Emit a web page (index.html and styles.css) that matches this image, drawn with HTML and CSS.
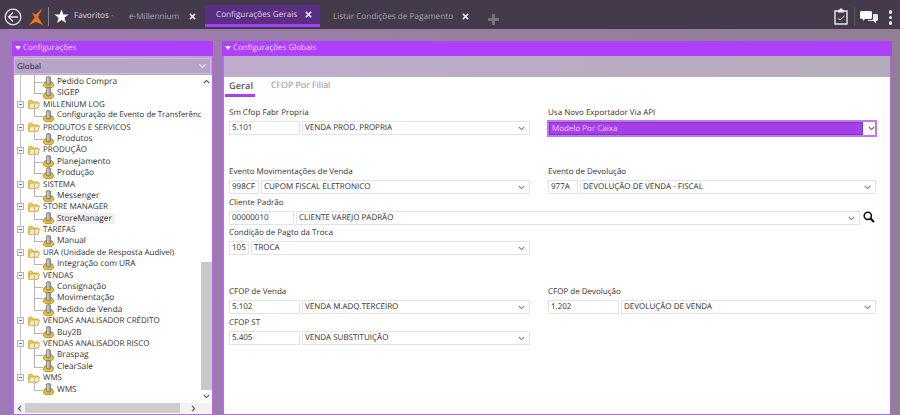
FILE: index.html
```html
<!DOCTYPE html>
<html lang="pt-BR">
<head>
<meta charset="utf-8">
<title>Configurações Gerais</title>
<link rel="stylesheet" href="styles.css">
</head>
<body>
<svg class="defs" width="0" height="0" aria-hidden="true">
  <symbol id="node" viewBox="0 0 11 12">
    <path d="M.6 8 2 5.800h1.700v2h3.600v-2H9L10.400 8v2L8.800 11.600H2.200L.6 10Z" fill="#ecc02f" stroke="#a97f12" stroke-width=".8"/>
    <rect x="3.400" y=".6" width="4.200" height="8.400" rx="1.400" fill="#a3a3a3" stroke="#6f6f6f" stroke-width=".7"/>
    <rect x="4.400" y="1.500" width="1" height="6.500" fill="#e2e2e2"/>
  </symbol>
  <symbol id="folder" viewBox="0 0 12 10">
    <path d="M.6 2V8.800H10V3H5L4 1.200H1.400Z" fill="#f1c94e" stroke="#c9a53a" stroke-width=".8"/>
    <path d="M2.200 4H11.500L10 9.300H.6Z" fill="#fdeeaa" stroke="#c9a53a" stroke-width=".8"/>
  </symbol>
  <symbol id="chev" viewBox="0 0 7 5">
    <path d="M.8 1 3.500 3.600 6.200 1" fill="none" stroke="currentColor" stroke-width="1.100"/>
  </symbol>
  <symbol id="close" viewBox="0 0 8 8">
    <path d="M1 1 7 7M7 1 1 7" fill="none" stroke="currentColor" stroke-width="2"/>
  </symbol>
</svg>

<header class="topbar">
  <svg class="ic-back" viewBox="0 0 18 18"><circle cx="9" cy="9" r="7.800" fill="none" stroke="#e6e2ea" stroke-width="1.300"/><path d="M9 4.500 4.500 9 9 13.500M4.800 9H14" fill="none" stroke="#e6e2ea" stroke-width="1.300"/></svg>
  <svg class="ic-logo" viewBox="0 0 14 17"><path d="M13.500 0 7 6.500 3 4.500 5.800 9.500 0 17 7 14 14 17 9 9Z" fill="#f0731c"/></svg>
  <span class="vsep"></span>
  <svg class="ic-star" viewBox="0 0 17 17"><path d="M8.500 .5 10.600 6.200H16.500L11.800 10 13.600 16 8.500 12.400 3.400 16 5.200 10 .5 6.200H6.400Z" fill="#fff"/></svg>
  <span class="fav">Favoritos</span><span class="fav-dash">-</span>
  <nav class="tabs">
    <div class="tab t-mill"><span>e-Millennium</span><svg class="x"><use href="#close"/></svg></div>
    <div class="tab t-conf active"><span>Configurações Gerais</span><svg class="x"><use href="#close"/></svg></div>
    <div class="tab t-list"><span>Listar Condições de Pagamento</span><svg class="x"><use href="#close"/></svg></div>
    <svg class="plus" viewBox="0 0 11 11"><path d="M5.500 0V11M0 5.500H11" stroke="#77717c" stroke-width="3"/></svg>
  </nav>
  <div class="tools">
    <svg class="ic-clip" viewBox="0 0 14 17"><path d="M1 3H13V16H1Z" fill="none" stroke="#e8e8e8" stroke-width="1.400"/><path d="M4 1.800H5.500L6 .5H8L8.500 1.800H10V4.500H4Z" fill="#e8e8e8"/><path d="M4 10 6 12 10.500 8" fill="none" stroke="#e8e8e8" stroke-width="1"/></svg>
    <span class="vsep dim"></span>
    <svg class="ic-chat" viewBox="0 0 18 13"><path d="M0 1 1 0H11L12 1V7L11 8H5L3 10V8H1L0 7Z" fill="#fff"/><path d="M13 3H17L18 4V9L17 10H16V12.500L13.500 10H8.500L7.500 9H12L13 8Z" fill="#e9e9e9"/></svg>
    <span class="kebab"><i></i><i></i><i></i></span>
  </div>
</header>

<main class="desk">
  <section class="panel side">
    <h2 class="phead"><span class="tri"></span>Configurações</h2>
    <div class="scope"><div class="scope-box"><span>Global</span><svg class="chev"><use href="#chev"/></svg></div></div>
    <div class="treewrap">
      <div class="treerow">
        <ul class="tree">
          <li class="leaf"><svg class="ni"><use href="#node"/></svg><span>Pedido Compra</span></li>
          <li class="leaf"><svg class="ni"><use href="#node"/></svg><span>SIGEP</span></li>
          <li class="grp"><b class="box"></b><svg class="fo"><use href="#folder"/></svg><span>MILLENIUM LOG</span></li>
          <li class="leaf"><svg class="ni"><use href="#node"/></svg><span class="clip">Configuração de Evento de Transferência</span></li>
          <li class="grp"><b class="box"></b><svg class="fo"><use href="#folder"/></svg><span>PRODUTOS E SERVICOS</span></li>
          <li class="leaf"><svg class="ni"><use href="#node"/></svg><span>Produtos</span></li>
          <li class="grp"><b class="box"></b><svg class="fo"><use href="#folder"/></svg><span>PRODUÇÃO</span></li>
          <li class="leaf"><svg class="ni"><use href="#node"/></svg><span>Planejamento</span></li>
          <li class="leaf"><svg class="ni"><use href="#node"/></svg><span>Produção</span></li>
          <li class="grp"><b class="box"></b><svg class="fo"><use href="#folder"/></svg><span>SISTEMA</span></li>
          <li class="leaf"><svg class="ni"><use href="#node"/></svg><span>Messenger</span></li>
          <li class="grp"><b class="box"></b><svg class="fo"><use href="#folder"/></svg><span>STORE MANAGER</span></li>
          <li class="leaf"><svg class="ni"><use href="#node"/></svg><span class="sel">StoreManager</span></li>
          <li class="grp"><b class="box"></b><svg class="fo"><use href="#folder"/></svg><span>TAREFAS</span></li>
          <li class="leaf"><svg class="ni"><use href="#node"/></svg><span>Manual</span></li>
          <li class="grp"><b class="box"></b><svg class="fo"><use href="#folder"/></svg><span>URA (Unidade de Resposta Audível)</span></li>
          <li class="leaf"><svg class="ni"><use href="#node"/></svg><span>Integração com URA</span></li>
          <li class="grp"><b class="box"></b><svg class="fo"><use href="#folder"/></svg><span>VENDAS</span></li>
          <li class="leaf"><svg class="ni"><use href="#node"/></svg><span>Consignação</span></li>
          <li class="leaf"><svg class="ni"><use href="#node"/></svg><span>Movimentação</span></li>
          <li class="leaf"><svg class="ni"><use href="#node"/></svg><span>Pedido de Venda</span></li>
          <li class="grp"><b class="box"></b><svg class="fo"><use href="#folder"/></svg><span>VENDAS ANALISADOR CRÉDITO</span></li>
          <li class="leaf"><svg class="ni"><use href="#node"/></svg><span>Buy2B</span></li>
          <li class="grp"><b class="box"></b><svg class="fo"><use href="#folder"/></svg><span>VENDAS ANALISADOR RISCO</span></li>
          <li class="leaf"><svg class="ni"><use href="#node"/></svg><span>Braspag</span></li>
          <li class="leaf"><svg class="ni"><use href="#node"/></svg><span>ClearSale</span></li>
          <li class="grp"><b class="box"></b><svg class="fo"><use href="#folder"/></svg><span>WMS</span></li>
          <li class="leaf"><svg class="ni"><use href="#node"/></svg><span>WMS</span></li>
        </ul>
        <div class="vbar">
          <svg class="sa up"><use href="#chev"/></svg>
          <div class="vtrack"><div class="vthumb"></div></div>
          <svg class="sa"><use href="#chev"/></svg>
        </div>
      </div>
      <div class="hbar">
        <svg class="sa left"><use href="#chev"/></svg>
        <div class="hthumb"></div>
        <svg class="sa right"><use href="#chev"/></svg>
      </div>
    </div>
  </section>

  <section class="panel content">
    <h2 class="phead"><span class="tri"></span>Configurações Globais</h2>
    <div class="band"></div>
    <div class="sheet">
      <div class="ctabs"><span class="ctab on">Geral</span><span class="ctab">CFOP Por Filial</span></div>

      <div class="grid g1">
        <div class="field">
          <label>Sm Cfop Fabr Propria</label>
          <div class="line"><span class="code w70">5.101</span><span class="pick">VENDA PROD. PROPRIA<svg class="chev"><use href="#chev"/></svg></span></div>
        </div>
        <div class="field">
          <label>Usa Novo Exportador Via API</label>
          <div class="focus"><span class="focus-val">Modelo Por Caixa</span><svg class="chev"><use href="#chev"/></svg></div>
        </div>
      </div>

      <div class="grid g2">
        <div class="field">
          <label>Evento Movimentações de Venda</label>
          <div class="line"><span class="code w29">998CF</span><span class="pick">CUPOM FISCAL ELETRONICO<svg class="chev"><use href="#chev"/></svg></span></div>
        </div>
        <div class="field">
          <label>Evento de Devolução</label>
          <div class="line"><span class="code w29">977A</span><span class="pick">DEVOLUÇÃO DE VENDA - FISCAL<svg class="chev"><use href="#chev"/></svg></span></div>
        </div>
      </div>

      <div class="field wide">
        <label>Cliente Padrão</label>
        <div class="line"><span class="code w64">00000010</span><span class="pick">CLIENTE VAREJO PADRÃO<svg class="chev"><use href="#chev"/></svg></span>
          <svg class="lens" viewBox="0 0 12 12"><circle cx="4.800" cy="4.800" r="3.600" fill="none" stroke="#111" stroke-width="1.600"/><path d="M7.500 7.500 11 11" stroke="#111" stroke-width="2.200"/></svg>
        </div>
      </div>

      <div class="grid g4">
        <div class="field">
          <label>Condição de Pagto da Troca</label>
          <div class="line"><span class="code w19">105</span><span class="pick">TROCA<svg class="chev"><use href="#chev"/></svg></span></div>
        </div>
      </div>

      <div class="grid g5">
        <div class="field">
          <label>CFOP de Venda</label>
          <div class="line"><span class="code w70">5.102</span><span class="pick">VENDA M.ADQ.TERCEIRO<svg class="chev"><use href="#chev"/></svg></span></div>
        </div>
        <div class="field">
          <label>CFOP de Devolução</label>
          <div class="line"><span class="code w70">1.202</span><span class="pick">DEVOLUÇÃO DE VENDA<svg class="chev"><use href="#chev"/></svg></span></div>
        </div>
      </div>

      <div class="grid g6">
        <div class="field">
          <label>CFOP ST</label>
          <div class="line"><span class="code w70">5.405</span><span class="pick">VENDA SUBSTITUIÇÃO<svg class="chev"><use href="#chev"/></svg></span></div>
        </div>
      </div>
    </div>
  </section>
</main>
</body>
</html>
```

FILE: styles.css
```css
* { box-sizing: border-box; }
html, body { height: 100%; }
body {
  margin: 0;
  width: 900px;
  height: 415px;
  overflow: hidden;
  display: flex;
  flex-direction: column;
  font-family: "Open Sans", "Noto Sans", sans-serif;
  font-size: 8px;
  text-rendering: geometricPrecision;
  color: #333;
  background: linear-gradient(90deg, #9f78b6 0%, #96809f 50%, #907f97 100%);
}
.defs { position: absolute; }

/* top bar */
.topbar {
  flex: none;
  height: 29px;
  background: #443a4b;
  display: flex;
  align-items: flex-start;
  color: #ddd;
}
.ic-back { width: 18px; height: 18px; margin: 7.500px 0 0 4px; flex: none; }
.ic-logo { width: 14px; height: 17px; margin: 8px 0 0 7px; flex: none; }
.vsep { width: 1px; height: 19px; margin: 7px 0 0 5px; background: #8b8391; flex: none; }
.vsep.dim { margin: 7px 0 0 6px; background: #5d5464; }
.ic-star { width: 15px; height: 15px; margin: 9px 0 0 5px; flex: none; }
.fav { margin: 9px 0 0 5px; font-size: 8.200px; line-height: 13px; color: #d9d6dc; width: 34px; white-space: nowrap; }
.fav-dash { margin: 9px 0 0 3px; font-size: 8px; line-height: 13px; color: #aaa; width: 4px; }
.tabs { display: flex; align-items: flex-start; flex: 1; margin-left: 14px; }
.tab {
  display: flex;
  align-items: center;
  height: 22px;
  margin-top: 5px;
  font-size: 8.200px;
  color: #a9a4ae;
  white-space: nowrap;
}
.tab .x { width: 7px; height: 7px; color: #e2e0e4; flex: none; }
.t-mill { width: 76px; }
.t-mill span { width: 60px; }
.t-conf { width: 115px; padding-left: 11px; background: #5b2e85; border-bottom: 3px solid #a63ff8; color: #dcd3e4; }
.t-conf span { width: 89px; }
.t-list { width: 160px; padding-left: 13px; }
.t-list span { width: 129px; }
.plus { width: 11px; height: 11px; margin: 14px 0 0 8px; flex: none; }
.tools { display: flex; align-items: flex-start; margin-right: 8px; }
.ic-clip { width: 14px; height: 17px; margin-top: 7.500px; flex: none; }
.ic-chat { width: 18px; height: 13px; margin: 11px 0 0 5px; flex: none; }
.kebab { display: flex; flex-direction: column; gap: 2px; margin: 10px 0 0 11px; }
.kebab i { width: 3.500px; height: 3.500px; border-radius: 50%; background: #eee; display: block; }

/* desktop */
.desk {
  flex: 1;
  display: flex;
  gap: 9px;
  padding: 12px 8px 0 12px;
  min-height: 0;
}
.panel {
  display: flex;
  flex-direction: column;
  border: 2px solid #b668ee;
  border-top: 0;
  border-bottom-width: 1px;
  background: #fff;
  height: 374px;
}
.side { width: 201px; flex: none; border-right-width: 1px; }
.content { flex: 1; min-width: 0; border-right-color: #a86cc8; }
.phead {
  margin: 0 -2px;
  height: 15px;
  flex: none;
  background: #af40fe;
  color: #e9d8f5;
  font-size: 8px;
  font-weight: 400;
  line-height: 13px;
  padding: 0 0 2px 3px;
  display: flex;
  align-items: center;
}
.side .phead { margin-right: -1px; }
.tri {
  width: 0; height: 0;
  border-left: 3px solid transparent;
  border-right: 3px solid transparent;
  border-top: 4px solid #fff;
  margin-right: 2px;
}
.scope {
  flex: none;
  height: 19px;
  padding: 2px 1px 1px 0;
  background: linear-gradient(90deg, #bda9cb, #b9a6c6);
}
.scope-box {
  height: 16px;
  display: flex;
  align-items: center;
  justify-content: space-between;
  padding: 0 3px 0 2px;
  border: 1px solid #cbbdd6;
  background: #b7a3c5;
  color: #2c2631;
}
.scope-box .chev { color: #e3dce8; width: 9px; height: 6px; }
.chev { width: 7px; height: 5px; flex: none; color: #888; }

/* tree */
.treewrap { flex: 1; min-height: 0; display: flex; flex-direction: column; }
.treerow { flex: 1; min-height: 0; display: flex; }
.tree {
  list-style: none;
  margin: 0;
  padding: 1px 0 0;
  flex: 1;
  min-width: 0;
  overflow: hidden;
  background: linear-gradient(#c4c4c4, #c4c4c4) 6px 0 / 1px 304px no-repeat;
}
.tree li {
  height: 11.400px;
  display: flex;
  align-items: center;
  position: relative;
  white-space: nowrap;
  line-height: 11.400px;
  color: #333;
}
.grp { padding-left: 3px; font-size: 8px; }
.box {
  width: 7px; height: 7px;
  border: 1px solid #b4b4b4;
  background: linear-gradient(#6a7fa0, #6a7fa0) center / 3px 1px no-repeat, #f2f2f2;
  flex: none;
}
.fo { width: 12px; height: 10px; margin: 0 3px 0 4px; flex: none; }
.leaf { padding-left: 29px; font-size: 8.300px; }
.leaf::before {
  content: "";
  position: absolute;
  left: 20px;
  top: -6px;
  width: 8px;
  height: 12px;
  border-left: 1px solid #b5b5b5;
  border-bottom: 1px solid #b5b5b5;
}
.ni { width: 11px; height: 12px; margin-right: 3px; flex: none; position: relative; }
.sel { background: #f1f1f1; padding: 0 3px 0 1px; margin-left: -1px; }
.clip { font-size: 7.900px; }

/* scrollbars */
.vbar { width: 11px; flex: none; display: flex; flex-direction: column; align-items: center; background: #fff; }
.vtrack { flex: 1; width: 11px; display: flex; flex-direction: column; justify-content: flex-end; }
.vthumb { height: 128px; background: #c8c8c8; }
.sa { width: 7px; height: 5px; margin: 4px 0; color: #555; flex: none; }
.sa.up { transform: rotate(180deg); }
.hbar { height: 10px; margin-bottom: 1px; flex: none; display: flex; align-items: center; background: #f2f2f2; padding-left: 1px; }
.sa.left { transform: rotate(90deg); margin: 0 1px; }
.sa.right { transform: rotate(-90deg); margin: 0 0 0 10px; }
.hthumb { width: 155px; height: 10px; margin-left: 1px; background: #cdcdcd; }

/* content */
.band { height: 21px; flex: none; background: linear-gradient(90deg, #bfaccd, #b4acba); }
.sheet { flex: 1; min-height: 0; padding: 0 14px 0 5px; display: flex; flex-direction: column; }
.ctabs { display: flex; height: 21px; margin-left: -4px; flex: none; }
.ctab {
  font-size: 8.800px;
  line-height: 17px;
  color: #8f8a94;
  padding: 0 2px;
  height: 20px;
  margin-right: 14px;
}
.ctab.on {
  color: #5c5660;
  font-weight: 600;
  font-size: 9.300px;
  padding: 0 0 0 4px;
  width: 30px;
  border-bottom: 3px solid #a63ff8;
  white-space: nowrap;
}
.grid { display: grid; grid-template-columns: 301px 328px; column-gap: 18px; flex: none; }
.g1 { margin-top: 8px; }
.g2 { margin-top: 28px; }
.wide { margin-top: 2px; flex: none; }
.g4 { margin-top: 1px; }
.g5 { margin-top: 30px; }
.g6 { margin-top: 2px; }
.field label { display: block; height: 14px; line-height: 14px; margin-bottom: 1px; color: #3a302b; white-space: nowrap; }
.line { display: flex; align-items: center; gap: 2px; height: 14px; }
.code, .pick {
  height: 14px;
  line-height: 12px;
  border: 1px solid #e3e3e3;
  background: #fff;
  color: #2e2e2e;
  padding: 0 2px;
  white-space: nowrap;
  flex: none;
}
.w70 { width: 71px; }
.w29 { width: 30px; }
.w64 { width: 65px; }
.w19 { width: 20px; }
.pick { flex: 1; min-width: 0; display: flex; align-items: center; justify-content: space-between; padding-right: 4px; }
.wide .line { width: 647px; }
.wide .pick { flex: none; width: 564px; }
.lens { width: 12px; height: 12px; flex: none; margin: 0 0 2px 1px; }
.focus {
  height: 17px;
  margin: -1px 0 0 -1px;
  width: 330px;
  display: flex;
  align-items: center;
  border: 2px solid #c574f5;
  background: #fff;
}
.focus-val {
  width: 314px;
  height: 13px;
  line-height: 12px;
  background: #a53fea;
  border: 1px solid #7e3bb0;
  color: #f0cdf8;
  padding-left: 2px;
}
.focus .chev { margin-left: 5px; color: #666; }
```
